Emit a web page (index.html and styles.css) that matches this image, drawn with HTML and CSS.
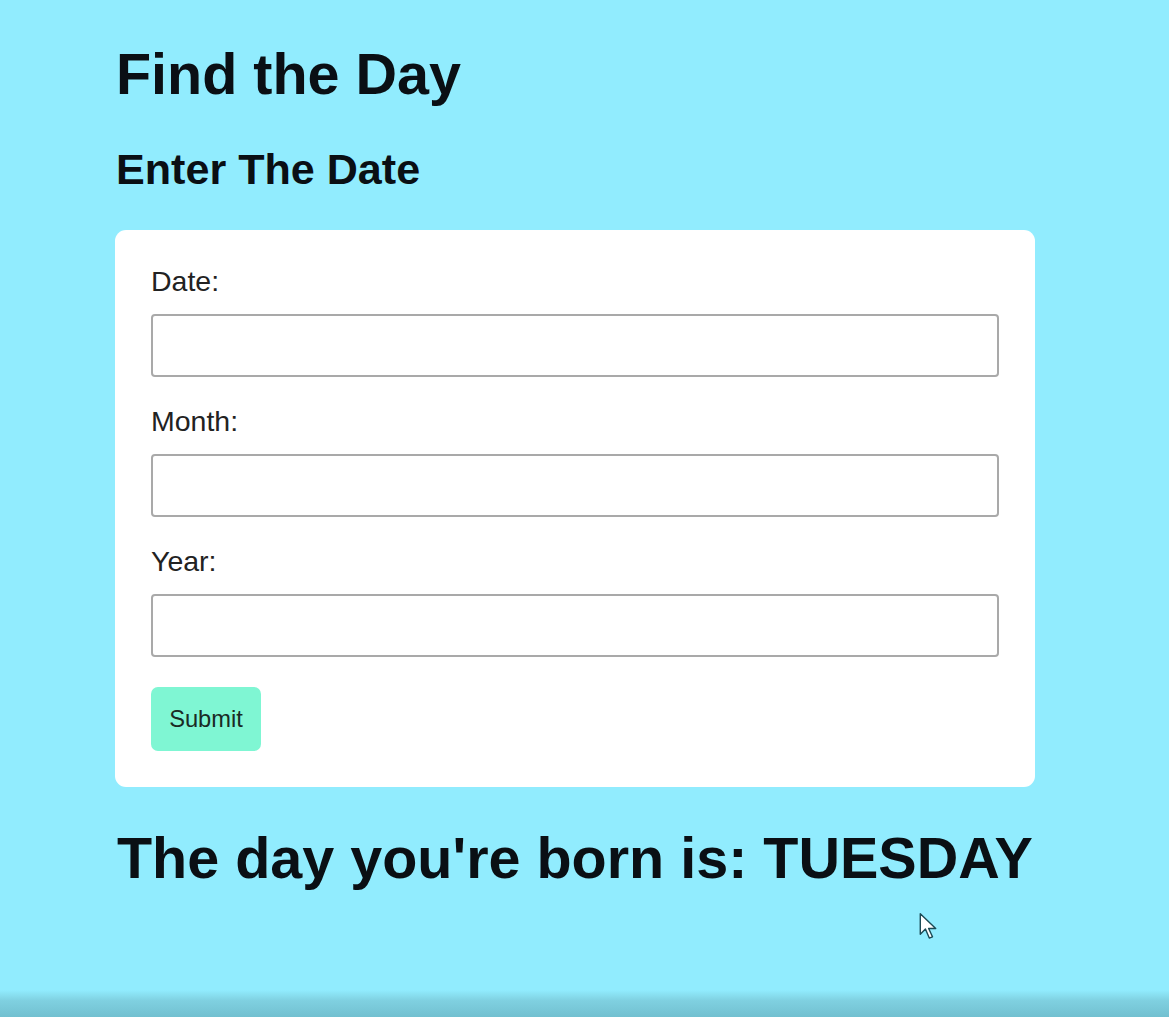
FILE: index.html
```html
<!DOCTYPE html>
<html lang="en">
<head>
<meta charset="utf-8">
<title>Find the Day</title>
<link rel="stylesheet" href="styles.css">
</head>
<body>
<main class="page">
  <h1 class="title">Find the Day</h1>
  <h2 class="subtitle">Enter The Date</h2>
  <form class="card">
    <label class="field-label" for="date">Date:</label>
    <input class="field-input" id="date" type="text">
    <label class="field-label" for="month">Month:</label>
    <input class="field-input" id="month" type="text">
    <label class="field-label" for="year">Year:</label>
    <input class="field-input" id="year" type="text">
    <button class="submit" type="button">Submit</button>
  </form>
  <h1 class="result">The day you're born is: TUESDAY</h1>
</main>
<svg class="cursor" width="18" height="29" viewBox="0 0 14 22" aria-hidden="true">
  <path d="M1 1 L1 17 L5 13 L8 20 L10.5 19 L7.5 12.5 L13 12.5 Z" fill="#ffffff" stroke="#1b4a55" stroke-width="1.1" stroke-linejoin="round"/>
</svg>
<div class="shade"></div>
</body>
</html>
```
FILE: styles.css
```css
html, body {
  margin: 0;
  padding: 0;
}
body {
  background: #91ecfe;
  min-height: 1017px;
  font-family: "Liberation Sans", Arial, sans-serif;
  color: #0a0f14;
  position: relative;
  overflow: hidden;
}
.page {
  width: 920px;
  padding: 42px 0 0 115px;
  box-sizing: content-box;
}
.title {
  margin: 0;
  font-size: 57.5px;
  font-weight: bold;
  line-height: 64px;
  padding-left: 1px;
}
.subtitle {
  margin: 39px 0 0 0;
  font-size: 43.1px;
  font-weight: bold;
  line-height: 48px;
  padding-left: 1px;
}
.card {
  margin-top: 37px;
  background: #ffffff;
  border-radius: 11px;
  padding: 35px 36px 36px 36px;
  display: flex;
  flex-direction: column;
  align-items: flex-start;
}
.field-label {
  font-size: 28.5px;
  line-height: 32px;
  color: #222;
}
.field-input {
  margin: 17px 0 28px 0;
  width: 848px;
  height: 63px;
  box-sizing: border-box;
  border: 2px solid #a9a9a9;
  border-radius: 4px;
  background: #fff;
  font-size: 28px;
  padding: 0 12px;
}
.field-input:last-of-type {
  margin-bottom: 30px;
}
.submit {
  width: 110px;
  height: 64px;
  border: none;
  border-radius: 7px;
  background: #7ff6d3;
  color: #1a2a24;
  font-family: "Liberation Sans", Arial, sans-serif;
  font-size: 23.7px;
  padding: 0;
}
.result {
  margin: 39px 0 0 2px;
  font-size: 57.5px;
  font-weight: bold;
  line-height: 64px;
  white-space: nowrap;
}
.cursor {
  position: absolute;
  left: 919px;
  top: 912px;
}
.shade {
  position: absolute;
  left: 0;
  right: 0;
  top: 990px;
  height: 27px;
  background: linear-gradient(to bottom, rgba(114,192,208,0) 0%, #7fd0e0 40%, #72c0d0 100%);
}
```
